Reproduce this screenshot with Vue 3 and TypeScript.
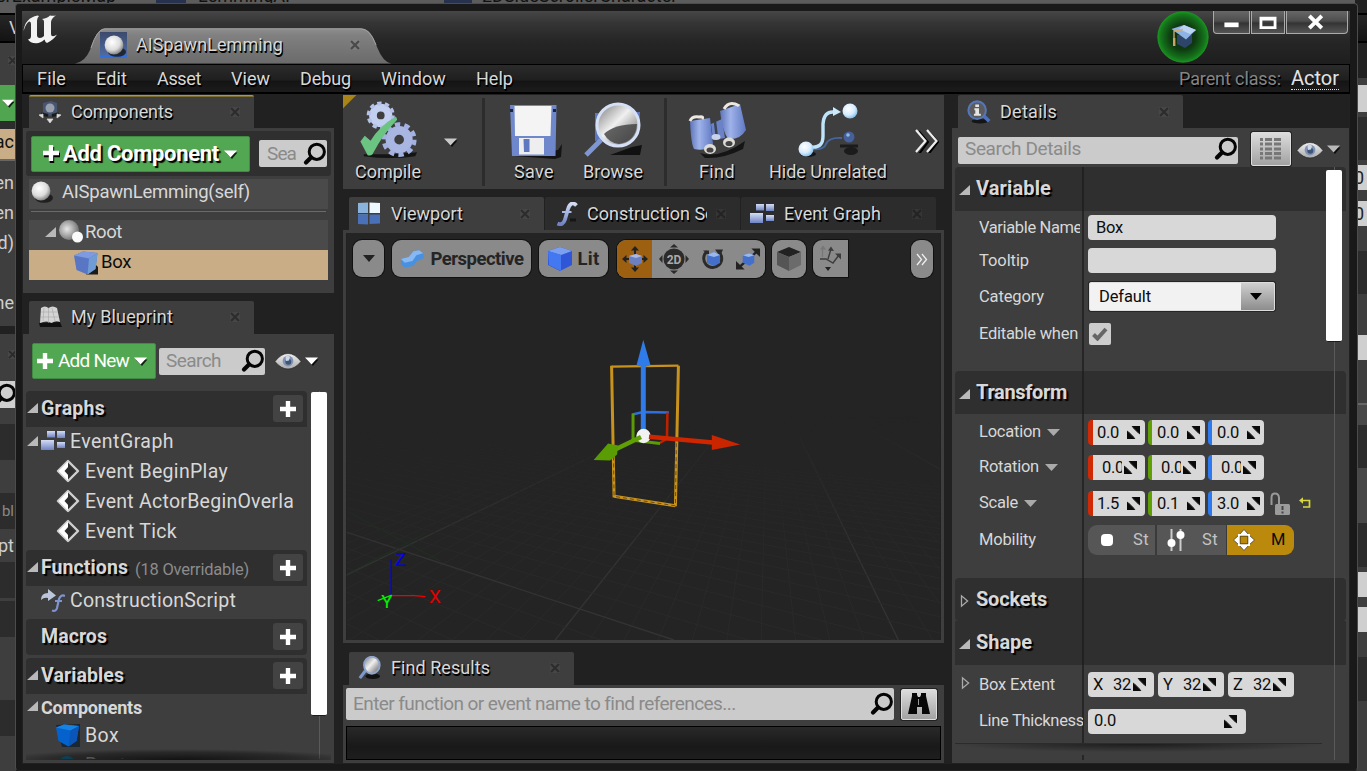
<script setup lang="ts">
import type { Directive } from 'vue'

/* Adjusts tracking so that a label fills the given width in pixels. */
const vFit: Directive<HTMLElement, number> = {
  mounted(el, { value }) {
    const count = (el.textContent ?? '').trim().length
    const natural = el.getBoundingClientRect().width
    el.style.letterSpacing = `${(value - natural) / Math.max(count, 1)}px`
  },
}

interface Strip { h: number; kind: string; text?: string }

const leftStrip: Strip[] = [
  { h: 9, kind: 'tabbar' },
  { h: 30, kind: 'menu', text: 'V' },
  { h: 42, kind: 'panel' },
  { h: 36, kind: 'green' },
  { h: 8, kind: 'header' },
  { h: 30, kind: 'tan', text: 'ac' },
  { h: 2, kind: 'line' },
  { h: 7, kind: 'panel' },
  { h: 30, kind: 'panel', text: 'en' },
  { h: 30, kind: 'panel', text: 'en' },
  { h: 30, kind: 'panel', text: 'd)' },
  { h: 30, kind: 'panel' },
  { h: 30, kind: 'panel', text: 'ne' },
  { h: 8, kind: 'panel' },
  { h: 8, kind: 'gap' },
  { h: 47, kind: 'panel' },
  { h: 27, kind: 'find' },
  { h: 16, kind: 'panel' },
  { h: 36, kind: 'header' },
  { h: 33, kind: 'panel' },
  { h: 36, kind: 'header dim', text: 'bl' },
  { h: 33, kind: 'panel', text: 'pt' },
  { h: 36, kind: 'header' },
  { h: 3, kind: 'panel' },
  { h: 36, kind: 'header' },
  { h: 63, kind: 'panel' },
  { h: 36, kind: 'header' },
  { h: 40, kind: 'panel' },
]

const rightStrip: Strip[] = [
  { h: 13, kind: 'gap' },
  { h: 30, kind: 'menu' },
  { h: 35, kind: 'gap' },
  { h: 7, kind: 'panel' },
  { h: 27, kind: 'field' },
  { h: 5, kind: 'panel' },
  { h: 43, kind: 'header' },
  { h: 5, kind: 'panel' },
  { h: 25, kind: 'field', text: '0' },
  { h: 11, kind: 'panel' },
  { h: 25, kind: 'field', text: '0' },
  { h: 25, kind: 'panel' },
  { h: 43, kind: 'header' },
  { h: 41, kind: 'panel' },
  { h: 25, kind: 'field' },
  { h: 43, kind: 'panel' },
  { h: 2, kind: 'line' },
  { h: 20, kind: 'row' },
  { h: 43, kind: 'header' },
  { h: 55, kind: 'row' },
  { h: 44, kind: 'header' },
  { h: 5, kind: 'panel' },
  { h: 25, kind: 'field' },
  { h: 10, kind: 'panel' },
  { h: 25, kind: 'field' },
  { h: 25, kind: 'panel' },
  { h: 44, kind: 'header' },
  { h: 70, kind: 'panel' },
]

const menus = [
  { label: 'File', w: 29 }, { label: 'Edit', w: 31 }, { label: 'Asset', w: 44 },
  { label: 'View', w: 39 }, { label: 'Debug', w: 51 }, { label: 'Window', w: 65 },
  { label: 'Help', w: 37 },
]

const events = [
  { label: 'Event BeginPlay', w: 143 },
  { label: 'Event ActorBeginOverla', w: 209 },
  { label: 'Event Tick', w: 92 },
]

const vectors = [
  { label: 'Location', w: 62, values: ['0.0', '0.0', '0.0'], cls: 'r-loc' },
  { label: 'Rotation', w: 60, values: ['0.0', '0.0', '0.0'], cls: 'r-rot' },
  { label: 'Scale', w: 39, values: ['1.5', '0.1', '3.0'], cls: 'r-scl' },
]
const axes = ['x', 'y', 'z']

/* Ground grid: two line families that meet on the horizon. */
const fanB = Array.from({ length: 46 }, (_, i) => {
  const n = i - 24
  return { x: 899 + n * 34.4, major: n % 10 === 0 }
})
const fanA = Array.from({ length: 36 }, (_, i) => {
  const n = i - 12
  return { x: 674 + n * 74, major: n === 0 }
})
</script>

<template>
  <div class="desktop">
    <svg class="defs" width="0" height="0">
      <defs>
        <radialGradient id="gBall" cx=".4" cy=".35" r=".7">
          <stop offset="0" stop-color="#fff" /><stop offset=".6" stop-color="#dcdcdc" /><stop offset="1" stop-color="#777" />
        </radialGradient>
        <radialGradient id="gBall2" cx=".4" cy=".45" r=".65">
          <stop offset="0" stop-color="#e8e8e8" /><stop offset=".5" stop-color="#aaa" /><stop offset="1" stop-color="#666" />
        </radialGradient>
        <radialGradient id="gCyan" cx=".4" cy=".35" r=".75">
          <stop offset="0" stop-color="#fff" /><stop offset=".55" stop-color="#d6ecff" /><stop offset="1" stop-color="#6aaede" />
        </radialGradient>
        <linearGradient id="gPale" x1="0" y1="0" x2="0" y2="1">
          <stop offset="0" stop-color="#d3ddf4" /><stop offset="1" stop-color="#6f83c4" />
        </linearGradient>
        <linearGradient id="gLens" x1="0" y1="0" x2="1" y2="1">
          <stop offset="0" stop-color="#777" /><stop offset=".45" stop-color="#f0f0f0" /><stop offset="1" stop-color="#555" />
        </linearGradient>
        <linearGradient id="gTab" x1="0" y1="0" x2="0" y2="1">
          <stop offset="0" stop-color="#8e8e8e" /><stop offset=".2" stop-color="#808080" /><stop offset="1" stop-color="#6b6b6b" />
        </linearGradient>
        <linearGradient id="gEye" x1="0" y1="0" x2="0" y2="1">
          <stop offset="0" stop-color="#f0f0f0" /><stop offset="1" stop-color="#aaa" />
        </linearGradient>
        <linearGradient id="gFade" x1="0" y1="0" x2="0" y2="1">
          <stop offset=".45" stop-color="#000" /><stop offset=".8" stop-color="#ddd" /><stop offset="1" stop-color="#eee" />
        </linearGradient>
        <linearGradient id="gBino" x1="0" y1="0" x2="1" y2="0">
          <stop offset="0" stop-color="#5d75b8" /><stop offset=".4" stop-color="#9fb3ea" /><stop offset="1" stop-color="#5f78c2" />
        </linearGradient>
      </defs>

      <symbol id="i-x" viewBox="0 0 10 10">
        <rect width="10" height="10" fill="#fff" opacity=".09" />
        <path d="M1 1 9 9M9 1 1 9" stroke="#1c1c1c" stroke-width="2.200" />
      </symbol>
      <symbol id="i-mag" viewBox="0 0 24 24">
        <circle cx="13.8" cy="9.8" r="7.600" fill="none" stroke="#050505" stroke-width="3" />
        <path d="M8 15.6 3 20.6" stroke="#050505" stroke-width="4.2" stroke-linecap="round" />
      </symbol>
      <symbol id="i-plus" viewBox="0 0 16 16"><path d="M5.8 0h4.4v5.8H16v4.4h-5.8V16H5.8v-5.8H0V5.8h5.8z" fill="#fff" /></symbol>
      <symbol id="i-caret" viewBox="0 0 14 9">
        <path d="M1.500 2.500h12L8 9z" fill="#000" opacity=".8" /><path d="M0 .5h13L6.500 7.500z" fill="currentColor" />
      </symbol>
      <symbol id="i-open" viewBox="0 0 12 12"><path d="M11 1v10H0z" fill="#b9b9b9" /></symbol>
      <symbol id="i-closed" viewBox="0 0 10 14"><path d="M1.500 1.800v10.400L7.600 7z" fill="none" stroke="#aaa" stroke-width="1.300" /></symbol>
      <symbol id="i-eye" viewBox="0 0 28 18">
        <path d="M1 9.500Q7 1.500 14 1.500t13 8Q21 17 14 17T1 9.500z" fill="url(#gEye)" stroke="#1d1d1d" stroke-width=".6" />
        <circle cx="14" cy="9" r="5.400" fill="#8093b4" /><circle cx="14.3" cy="9.800" r="3" fill="#3f5578" />
        <path d="M11.500 4.500q3-1.500 4.500.5l-1 3.500-3 .5z" fill="#cfd8e6" />
      </symbol>
      <symbol id="i-ball" viewBox="0 0 24 24">
        <ellipse cx="14" cy="18" rx="9" ry="4.800" fill="#111" opacity=".75" /><circle cx="11" cy="11" r="9.400" fill="url(#gBall)" />
      </symbol>
      <symbol id="i-cube" viewBox="0 0 24 24">
        <path d="M12 23.500 21 13l3 3v7.500z" fill="#1a1a1a" />
        <path d="M0 4.500 9 .5 23.500 2 21.500 18 13.500 23.500 2.500 19z" fill="#5876c4" />
        <path d="M0 4.500 9 .5 23.500 2 15 7.500z" fill="#7f9ae0" /><path d="M15 7.500 23.500 2 21.500 18 13.500 23.500z" fill="#6f9cd4" />
      </symbol>
      <symbol id="i-cube2" viewBox="0 0 24 24">
        <path d="M0 2 24 1v23H6z" fill="#10202e" opacity=".75" />
        <path d="M0 4.500 8 1.500 23 3 20.500 18 12.500 23.500 2.500 18z" fill="#0562cc" />
        <path d="M0 4.500 8 1.500 23 3 14.500 7.500z" fill="#1583e4" /><path d="M14.500 7.500 23 3 20.500 18 12.500 23.500z" fill="#0a55b8" />
      </symbol>
      <symbol id="i-scene" viewBox="0 0 24 24">
        <path d="M5 3 13 1l6 2v9l-7 4-7-4z" fill="#465672" /><circle cx="12" cy="8" r="4.500" fill="#9a9fae" />
        <path d="M3 14 10 15.500M21 14 14 15.500" stroke="#1a1a1a" stroke-width="3" />
        <path d="M1 15l4-1v4zM23 15l-4-1v4zM9 19h6l-3 4z" fill="#e0e0e0" stroke="#ccc" stroke-width=".8" />
      </symbol>
      <symbol id="i-book" viewBox="0 0 24 24">
        <path d="M1 18 22 17l2 5H2z" fill="#111" />
        <path d="M3 3q4-3 7.500 0 4-3 8.500 0l3 14q-4-2-8.500 1-5-3-11.500 0z" fill="#d4d4d4" />
        <path d="M10.500 3v15M6 3 5 16M14 3l3 13M3 7h17M2.500 12h18" stroke="#a4a4a4" stroke-width=".6" fill="none" />
      </symbol>
      <symbol id="i-graph" viewBox="0 0 24 20">
        <rect x="6" y="0" width="8" height="6.500" fill="url(#gPale)" /><rect x="16" y="0" width="8" height="7" fill="url(#gPale)" />
        <rect x="0" y="9" width="13" height="10" fill="url(#gPale)" /><rect x="16" y="11" width="8" height="6" fill="url(#gPale)" />
      </symbol>
      <symbol id="i-event" viewBox="0 0 24 24">
        <path d="M12 2 22 12 12 22 2 12z" fill="#343434" stroke="#cfcfcf" stroke-width="2.400" stroke-linejoin="round" />
        <path d="M12 2.500v19L2.500 12z" fill="#fff" /><path d="M13 7 18 12 13 17 8.500 12z" fill="#2e2e2e" />
      </symbol>
      <symbol id="i-func" viewBox="0 0 24 24">
        <path d="M0 11Q0 4 7 4V0l8 6.500L7 12V9Q3 8 0 11z" fill="#bcc6da" />
        <path d="M24 7q-4-2-6 3l-2 9q-1 4-5 2.500M14 12h7" fill="none" stroke="#8094d0" stroke-width="2.200" />
      </symbol>
      <symbol id="i-f" viewBox="0 0 22 24">
        <path d="M14 18h6" stroke="#161616" stroke-width="3" />
        <path d="M20.500 3.500Q15-2 12 7L9 17.500Q7 24 1.500 21.500" fill="none" stroke="url(#gPale)" stroke-width="3.800" />
        <path d="M6 10h9.500" stroke="#a8b8e4" stroke-width="2" />
      </symbol>
      <symbol id="i-view" viewBox="0 0 22 24">
        <path d="M0 1 10 .5V11H0zM0 12.500h10V22L0 21z" fill="#8ab4dc" /><path d="M11.500 .5 22 1v10H11.500z" fill="#eef8ff" />
        <path d="M11.500 12.500H22v9l-10.500.5zM0 12.500h10V22.500L0 22z" fill="#4a70b8" />
      </symbol>
      <symbol id="i-lens" viewBox="0 0 24 26">
        <ellipse cx="15" cy="22" rx="8" ry="3" fill="#111" />
        <path d="M7 16 1 24" stroke="#7d98cc" stroke-width="3.400" /><ellipse cx="14" cy="10" rx="8.500" ry="9.200" fill="url(#gLens)" stroke="#8fa5cc" stroke-width="2" />
      </symbol>
      <symbol id="i-info" viewBox="0 0 26 26">
        <ellipse cx="14" cy="23" rx="9" ry="2.500" fill="#151515" />
        <path d="M17 16l7 7" stroke="#4a70c0" stroke-width="4" /><circle cx="11" cy="11" r="9.500" fill="#5c5c5c" stroke="#5576b8" stroke-width="2.200" />
        <path d="M9 5h4v2.600H9zM8 9h5v6h2v2H7.500v-2H9v-4H8z" fill="#e4e4e4" />
      </symbol>
      <symbol id="i-spin" viewBox="0 0 13 13">
        <path d="M4.500 0H13v8.500zM0 4.500V13h8.500z" fill="#0a0a0a" />
        <path d="M5.500 1.500 11.500 7.500M1.500 5.500 7.500 11.500" stroke="#0a0a0a" stroke-width=".5" />
      </symbol>
    </svg>

    <!-- window behind: visible edges only -->
    <div class="back-top">
      <span class="bt1">erExampleMap</span><span class="bt-ico"></span><span class="bt2">LemmingAI</span><span class="bt-ico2"></span><span class="bt3">2DSideScrollerCharacter</span>
    </div>
    <div class="back-mid">
      <div class="strip">
        <div v-for="(s, i) in leftStrip" :key="i" class="seg" :class="s.kind" :style="{ height: s.h + 'px' }">
          <span v-if="s.text">{{ s.text }}</span>
          <svg v-if="s.kind === 'find'" class="find-ico"><use href="#i-mag" /></svg>
          <svg v-if="s.kind === 'green'" class="green-ico"><use href="#i-caret" /></svg>
          <svg v-if="i === 2 || i === 15" class="x-ico"><use href="#i-x" /></svg>
        </div>
      </div>
      <div class="strip right">
        <div v-for="(s, i) in rightStrip" :key="i" class="seg" :class="s.kind" :style="{ height: s.h + 'px' }">
          <span v-if="s.text">{{ s.text }}</span>
        </div>
      </div>
    </div>

    <div class="window">
      <header class="title">
        <svg class="logo" viewBox="0 0 34 30">
          <path d="M.5 17Q2 4 14.500 1.500l1.500.5Q14 4 14 6.500V21q0 3 3 3 2 0 4-2V7.500Q21 5.500 19 5q5.500-1 8-3.500 3 .5 6 0-4.500 2.500-5 6.500v12q0 2.300 2 2.300 1.800 0 4-1.800-3.500 5.500-10 8.500-2-1-2.500-3.500Q17 29.500 13 29.200 7 29 5 25.500q3-.5 3-3.500V10Q8 7 6 7.500 3 9 .5 17z" fill="#f2f2f2" />
        </svg>
        <div class="wtab">
          <svg class="wtab-bg" viewBox="0 0 316 36"><path d="M0 35.500Q10 34 15 22 22 0 30 .5H286Q296 0 302 19 308 34 316 35.500z" fill="url(#gTab)" /><path d="M16 20Q22 1 30 .8H286Q295 1 301 17" fill="none" stroke="#a2a2a2" stroke-width="1" /></svg>
          <div class="wtab-row">
            <span class="thumb"><svg width="24" height="24"><use href="#i-ball" /></svg></span>
            <span v-fit="147" class="t18 sh">AISpawnLemming</span>
            <svg class="xs"><use href="#i-x" /></svg>
          </div>
        </div>
        <svg class="cap" viewBox="0 0 52 52">
          <defs><radialGradient id="gCap"><stop offset="0" stop-color="#0c260d" /><stop offset=".5" stop-color="#0f3a11" /><stop offset=".85" stop-color="#14701a" /><stop offset="1" stop-color="#18901f" /></radialGradient></defs>
          <circle cx="26" cy="26" r="25.200" fill="url(#gCap)" stroke="#1d9a22" stroke-width=".8" />
          <path d="M20 24v9l8 4 7-5v-8z" fill="#2c4568" /><path d="M14.500 18 27 14l12 5-10 9.500z" fill="#8db4e4" /><path d="M27 14 39 19l-6 4-11-5z" fill="#bcd4f4" />
          <path d="M26 18.500 17 20v12" fill="none" stroke="#d0ad78" stroke-width="1.300" /><path d="M16 27h2.400v8H16z" fill="#c9a468" />
        </svg>
        <div class="winbtns">
          <span class="b1"><svg viewBox="0 0 37 23"><path d="M11 12h15v5H11z" fill="#fff" /></svg></span>
          <span class="b2"><svg viewBox="0 0 34 23"><path d="M8 6h18v13H8zM11 10v6h12v-6z" fill="#fff" fill-rule="evenodd" /></svg></span>
          <span class="b3"><svg viewBox="0 0 62 23"><path d="M23 5 36 18M36 5 23 18" stroke="#fff" stroke-width="4" /></svg></span>
        </div>
      </header>

      <nav class="menubar">
        <span v-for="m in menus" :key="m.label" v-fit="m.w" class="menu-item sh">{{ m.label }}</span>
        <span v-fit="102" class="pclass sh">Parent class:</span>
        <span class="actor"><span v-fit="48">Actor</span></span>
      </nav>

      <main class="work">
        <section class="col left">
          <div class="tab active focus"><svg class="ti"><use href="#i-scene" /></svg><span v-fit="102" class="t18 sh">Components</span><svg class="xs"><use href="#i-x" /></svg></div>
          <div class="panel comps">
            <div class="addbar">
              <button class="green-btn big"><svg class="plus"><use href="#i-plus" /></svg><b v-fit="156">Add Component</b><svg class="caret"><use href="#i-caret" /></svg></button>
              <div class="search s1"><span v-fit="29">Sea</span><svg class="mag"><use href="#i-mag" /></svg></div>
            </div>
            <div class="crow self"><svg class="i24"><use href="#i-ball" /></svg><span v-fit="188">AISpawnLemming(self)</span></div>
            <div class="rule"></div>
            <div class="crow root"><svg class="tri"><use href="#i-open" /></svg>
              <svg class="i24" viewBox="0 0 24 24"><circle cx="10" cy="10" r="10" fill="url(#gBall2)" /><circle cx="18.500" cy="17" r="5.500" fill="#fafafa" /></svg>
              <span v-fit="37">Root</span></div>
            <div class="crow boxrow"><svg class="i24"><use href="#i-cube" /></svg><span v-fit="30">Box</span></div>
          </div>

          <div class="tab active second up"><svg class="ti"><use href="#i-book" /></svg><span v-fit="102" class="t18 sh">My Blueprint</span><svg class="xs"><use href="#i-x" /></svg></div>
          <div class="panel blue">
            <div class="bpbar">
              <button class="green-btn"><svg class="plus"><use href="#i-plus" /></svg><span v-fit="71">Add New</span><svg class="caret"><use href="#i-caret" /></svg></button>
              <div class="search s2"><span v-fit="55">Search</span><svg class="mag"><use href="#i-mag" /></svg></div>
              <svg class="eye"><use href="#i-eye" /></svg><svg class="caret ec"><use href="#i-caret" /></svg>
            </div>
            <div class="bpbody">
              <div class="tree">
                <div class="ghead"><svg class="tri"><use href="#i-open" /></svg><b v-fit="64">Graphs</b><span class="addp"><svg><use href="#i-plus" /></svg></span></div>
                <div class="trow eg"><svg class="tri"><use href="#i-open" /></svg><svg class="gico"><use href="#i-graph" /></svg><span v-fit="104">EventGraph</span></div>
                <div v-for="e in events" :key="e.label" class="trow ev"><svg class="i24"><use href="#i-event" /></svg><span v-fit="e.w">{{ e.label }}</span></div>
                <div class="ghead fn"><svg class="tri"><use href="#i-open" /></svg><b v-fit="87">Functions</b><em v-fit="114">(18 Overridable)</em><span class="addp"><svg><use href="#i-plus" /></svg></span></div>
                <div class="trow cs"><svg class="i24"><use href="#i-func" /></svg><span v-fit="166">ConstructionScript</span></div>
                <div class="ghead mc"><svg class="tri"></svg><b v-fit="66">Macros</b><span class="addp"><svg><use href="#i-plus" /></svg></span></div>
                <div class="ghead vr"><svg class="tri"><use href="#i-open" /></svg><b v-fit="83">Variables</b><span class="addp"><svg><use href="#i-plus" /></svg></span></div>
                <div class="trow cp"><svg class="tri"><use href="#i-open" /></svg><b v-fit="101">Components</b></div>
                <div class="trow ev bx"><svg class="i24"><use href="#i-cube2" /></svg><span v-fit="34">Box</span></div>
                <div class="trow ev rt"><svg class="i24" viewBox="0 0 24 24"><circle cx="11" cy="11" r="9" fill="#0a6a94" /></svg><span v-fit="41">Root</span></div>
              </div>
              <div class="sbar"><div class="thumbbar"></div></div>
            </div>
            <div class="fade"></div>
          </div>
        </section>

        <section class="col mid">
          <div class="toolbar">
            <div class="tool compile">
              <svg viewBox="355 98 64 62">
                <path d="M362 155h30l25-2-2 4q-25 4-53 0z" fill="#141414" />
                <circle cx="379.500" cy="115" r="8" fill="none" stroke="#c3cff0" stroke-width="8" /><circle cx="379.500" cy="115" r="12.500" fill="none" stroke="#b4c2ea" stroke-width="4" stroke-dasharray="4.400 3.450" />
                <circle cx="398.500" cy="140" r="9.500" fill="none" stroke="#a9b6e2" stroke-width="9" /><circle cx="398.500" cy="140" r="15.500" fill="none" stroke="#a3b1e0" stroke-width="5" stroke-dasharray="5.500 4.240" />
                <path d="M358.500 142 363 136l6 5Q378 126 395 116q2 3 1 4-14 14-25 35-2 2-5 1z" fill="#6cc482" />
              </svg><span v-fit="66" class="sh">Compile</span>
            </div>
            <svg class="caret tc"><use href="#i-caret" /></svg>
            <i class="sep"></i>
            <div class="tool save">
              <svg viewBox="506 98 60 62">
                <path d="M516 156 560 150l4-6-1 13-6 2z" fill="#141414" /><path d="M512 105h46.500l-1 51H514z" fill="#6f88cc" />
                <path d="M516.500 106h37l-1 30H517z" fill="#f4f4f4" /><path d="M521 138h25v16.500H521z" fill="#eee" /><path d="M525.500 139h6v13h-5.500z" fill="#6078c0" />
                <path d="M512 109h3v3h-3zM555 109h3v3h-3z" fill="#1c2440" />
              </svg><span v-fit="40" class="sh">Save</span>
            </div>
            <div class="tool browse">
              <svg viewBox="582 98 62 62">
                <path d="M610 155h30l2-10-10 2z" fill="#111" /><path d="M595 113h12v26l-12 2zM632 112h8l-1 20z" fill="#5c78c0" />
                <path d="M601 140 586 155" stroke="#7e96d2" stroke-width="5" /><circle cx="618" cy="125" r="21" fill="url(#gLens)" stroke="#d5e0f6" stroke-width="3" />
                <path d="M604 134Q614 124 637 124q-1 17-18 20-10-1-15-10z" fill="#3f3f3f" opacity=".8" />
              </svg><span v-fit="60" class="sh">Browse</span>
            </div>
            <i class="sep s2nd"></i>
            <div class="tool findt">
              <svg viewBox="686 98 62 62">
                <path d="M700 153q20 6 45-12l-2 8q-20 10-38 9z" fill="#151515" />
                <path d="M690 121 710 118 713 144Q705 152 694 149 691 144 690 121z" fill="url(#gBino)" />
                <path d="M720 111 740 104 746 130Q740 140 728 139 722 130 720 111z" fill="url(#gBino)" />
                <path d="M711 124 722 119 725 138 713 140z" fill="#6b82c6" /><path d="M715 122l2 16" stroke="#3b4252" stroke-width="2.500" />
                <path d="M690 121q2-5 9-4 5-1 3 2M724 109q4-7 11-5 3 1 4 2" stroke="#ece8e0" stroke-width="3" fill="none" />
                <ellipse cx="710" cy="149" rx="6" ry="5" fill="#dedcd6" /><ellipse cx="710" cy="150" rx="3.500" ry="2.600" fill="#444" /><ellipse cx="729" cy="142.500" rx="6" ry="5" fill="#dedcd6" /><ellipse cx="729" cy="143.500" rx="3.500" ry="2.600" fill="#444" />
                <ellipse cx="716" cy="137" rx="4.500" ry="3" fill="#c9d2ea" />
              </svg><span v-fit="36" class="sh">Find</span>
            </div>
            <div class="tool hide">
              <svg viewBox="797 98 62 62">
                <ellipse cx="808" cy="154" rx="8" ry="3" fill="#151515" /><ellipse cx="851" cy="151" rx="7" ry="4" fill="#1b1b1b" /><path d="M840 146h18" stroke="#1b1b1b" stroke-width="3" />
                <path d="M813 149Q824 150 826 144 829 137 842 138" fill="none" stroke="#46669c" stroke-width="2" />
                <path d="M812 147Q823 148 823 136V124Q824 111 834 112" fill="none" stroke="#bfe4fa" stroke-width="3.400" /><path d="M833 107l8 5-8 4z" fill="#cbeafc" />
                <circle cx="850" cy="111" r="7.500" fill="url(#gCyan)" /><circle cx="806" cy="149" r="7.500" fill="url(#gCyan)" /><circle cx="849" cy="137" r="5.500" fill="#45619c" /><circle cx="848" cy="135" r="1.800" fill="#9ab6e4" />
              </svg><span v-fit="118" class="sh">Hide Unrelated</span>
            </div>
            <svg class="more" viewBox="0 0 24 24"><path d="M3 1.500 12 12 3 24M12.500 1.500 22 12 12.500 24" transform="translate(1 1)" fill="none" stroke="#000" stroke-width="2" /><path d="M1 1 10.500 12 1 23M12 1 21.500 12 12 23" fill="none" stroke="#eee" stroke-width="2.200" /></svg>
          </div>

          <div class="tabs">
            <div class="tab active vt"><svg class="ti"><use href="#i-view" /></svg><span v-fit="72" class="t18 sh">Viewport</span><svg class="xs"><use href="#i-x" /></svg></div>
            <div class="tab idle ct"><svg class="ti"><use href="#i-f" /></svg><span class="clipt"><span v-fit="154" class="t18 sh">Construction Script</span></span><svg class="xs"><use href="#i-x" /></svg></div>
            <div class="tab idle et"><svg class="ti g"><use href="#i-graph" /></svg><span v-fit="97" class="t18 sh">Event Graph</span><svg class="xs"><use href="#i-x" /></svg></div>
          </div>

          <div class="viewport">
            <svg class="scene" viewBox="346 233 595 408">
              <defs><mask id="fade"><rect x="346" y="233" width="595" height="408" fill="url(#gFade)" /></mask></defs>
              <rect x="346" y="233" width="595" height="408" fill="#242424" />
              <g mask="url(#fade)">
                <line v-for="(l, i) in fanB" :key="'b' + i" x1="768" y1="372" :x2="l.x" y2="641" :stroke="l.major ? '#353535' : '#2a2a2a'" :stroke-width="l.major ? 1.4 : 1" />
                <line v-for="(l, i) in fanA" :key="'a' + i" x1="-143" y1="372" :x2="l.x" y2="641" :stroke="l.major ? '#353535' : '#2a2a2a'" :stroke-width="l.major ? 1.4 : 1" />
                <path d="M346 575 425 534M346 512 440 562" stroke="#1f3320" stroke-width="1" />
              </g>
              <g fill="none" stroke="#c8921c" stroke-width="3">
                <path d="M611.500 367 678.500 366" stroke-width="2.400" /><path d="M611.500 366 614 498M678.500 366 675.500 507" /><path d="M614 497 675.500 506.500" />
                <path d="M613.300 450 614 497 675.500 506.500 676.500 440" stroke="#6b4c0c" stroke-width="1" stroke-dasharray="4 3" />
              </g>
              <path d="M632.500 415 643 412.500 669 413" fill="none" stroke="#2d6fe0" stroke-width="2.600" />
              <path d="M667.500 413 667 439 659 444" fill="none" stroke="#bd2200" stroke-width="2.600" />
              <path d="M633 414v26M635 441 660 444" fill="none" stroke="#5b9c04" stroke-width="3" />
              <path d="M643.300 434V364" stroke="#2f7bea" stroke-width="5" /><path d="M643.300 340 636.500 365.500q7 3 14 0z" fill="#2f7bea" />
              <circle cx="643.500" cy="436.500" r="7.200" fill="#f2f2f2" />
              <path d="M649 437.200 713 443" stroke="#cf2600" stroke-width="4.400" /><path d="M712 435.500 740.500 445 712 450.500z" fill="#c92600" />
              <path d="M641 437.500 613 451" stroke="#5fa103" stroke-width="4.600" /><path d="M593.500 460.500 608 444l10 2-1 9-7 6z" fill="#5a9c04" />
              <path d="M390.500 560v36" stroke="#0000f0" stroke-width="1.200" /><path d="M390.500 596.500H414L425 597.500" fill="none" stroke="#f00000" stroke-width="1.200" /><path d="M391 596 377 601.500" stroke="#00f000" stroke-width="1.300" />
              <text x="394" y="567" fill="#0000f5" class="ax">Z</text><text x="428.500" y="604" fill="#e00000" class="ax">X</text><text x="380.500" y="608.500" fill="#00f000" class="ax">Y</text>
            </svg>
            <div class="vbar">
              <span class="vb v1"><svg width="12" height="7"><path d="M0 0h12L6 7z" fill="#222" /></svg></span>
              <span class="vb v2"><svg width="25" height="20" viewBox="0 0 26 20"><path d="M1 10 9 8 14 2 20 1 24 4 25 9 18 12 14 17 5 19 1 15z" fill="#4a90e0" /><path d="M1 10 9 8l5-6 6-1 4 3-7 2-4 6-8 2z" fill="#86b8f4" /></svg><b v-fit="93">Perspective</b></span>
              <span class="vb v3"><svg width="24" height="24" viewBox="0 0 24 24"><path d="M0 4 12 0 24 4v14l-12 6L0 18z" fill="#3056d8" /><path d="M0 4 12 0 24 4 13 8z" fill="#7ba0f0" /><path d="M0 4 13 8v16L1 18z" fill="#4478f0" /></svg><b v-fit="22">Lit</b></span>
              <span class="vb group">
                <span class="orange"><svg width="26" height="26" viewBox="0 0 26 26"><path d="M13 3v20M3 13h20" stroke="#222" stroke-width="2" /><path d="M13 0l4 4.500H9zM13 26l4-4.500H9zM0 13l4.500-4v8zM26 13l-4.500-4v8z" fill="#222" /><path d="M7 10l7-2 6 2v7l-6 3-7-3z" fill="#6c80c0" /><path d="M7 10l7-2 6 2-6 2z" fill="#aab8e4" /></svg></span>
                <span class="g2"><svg width="30" height="30" viewBox="0 0 30 30"><circle cx="15" cy="15" r="10.500" fill="#2b2b2b" /><path d="M15 0l4 3.500h-8zM15 30l4-3.500h-8zM0 15l3.500-4v8zM30 15l-3.500-4v8z" fill="#2b2b2b" /><text x="15" y="19.500" text-anchor="middle" class="d2">2D</text></svg></span>
                <span><svg width="24" height="24" viewBox="0 0 24 24"><path d="M6 4.500A9 9 0 1 0 18 5" fill="none" stroke="#2b2b2b" stroke-width="3" /><path d="M14 2.500h8l-3 7z" fill="#2b2b2b" /><path d="M2 3.500h6v5z" fill="#2b2b2b" /><path d="M6 8l7-3 6 3v8l-6 3-7-3z" fill="#4470cc" /><path d="M6 8l7-3 6 3-6 2z" fill="#9ab8ec" /></svg></span>
                <span><svg width="25" height="24" viewBox="0 0 26 24"><path d="M4 20 22 4" stroke="#222" stroke-width="2.400" /><path d="M16 1h9v9zM0 14v9h9z" fill="#222" /><path d="M7 8l7-2 5 2v8l-5 3-7-3z" fill="#4470cc" /><path d="M7 8l7-2 5 2-6 2z" fill="#9ab8ec" /></svg></span>
              </span>
              <span class="vb v5"><svg width="24" height="24" viewBox="0 0 24 24"><path d="M0 5 12 0 24 5 12 10z" fill="#222" /><path d="M0 5 12 10v14L0 18z" fill="#555" /><path d="M24 5 12 10v14l12-6z" fill="#6b6b6b" /></svg></span>
              <span class="vb v6"><svg width="24" height="27" viewBox="0 0 24 27"><path d="M1 14 7 14 14 18 20 10M9 14 12 4" fill="none" stroke="#3c3c3c" stroke-width="1.400" /><path d="M3.500 12V4" stroke="#777" stroke-width="1.200" /><path d="M9 5.500l3-4 3 4.500zM16 8.500h6v6z" fill="#3c3c3c" /><path d="M1 4.500l3-4 3 4z" fill="#777" /><path d="M6 22h6l-3 4z" fill="#222" /></svg></span>
              <span class="vb v7"><svg width="12" height="13" viewBox="0 0 12 13"><path d="M1 1 5.500 6.500 1 12M6 1 10.500 6.500 6 12" fill="none" stroke="#eee" stroke-width="1.300" /></svg></span>
            </div>
          </div>

          <div class="tab active ft up"><svg class="ti"><use href="#i-lens" /></svg><span v-fit="99" class="t18 sh">Find Results</span><svg class="xs"><use href="#i-x" /></svg></div>
          <div class="panel findp">
            <div class="findrow">
              <div class="search s3"><span v-fit="382">Enter function or event name to find references...</span><svg class="mag"><use href="#i-mag" /></svg></div>
              <span class="sq"><svg width="22" height="22" viewBox="0 0 22 22"><path d="M4 0h5v2l1 2h2l1-2V0h5v3l4 18h-8v-7H9v7H0L4 3z" fill="#080808" /><path d="M10.500 6v6" stroke="#999" /></svg></span>
            </div>
            <div class="results"></div>
          </div>
        </section>

        <section class="col right">
          <div class="tab active dt"><svg class="ti"><use href="#i-info" /></svg><span v-fit="57" class="t18 sh">Details</span><svg class="xs"><use href="#i-x" /></svg></div>
          <div class="panel det">
            <div class="dbar">
              <div class="search s4"><span v-fit="116">Search Details</span><svg class="mag"><use href="#i-mag" /></svg></div>
              <span class="sq list"><svg width="22" height="22" viewBox="0 0 22 22"><path d="M0 1.500h3M5 1.500h7M14 1.500h7M0 6h3M5 6h7M14 6h7M0 11h3M5 11h7M14 11h7M0 15.500h3M5 15.500h7M14 15.500h7M0 20h3M5 20h7M14 20h7" stroke="#777" stroke-width="2.800" /></svg></span>
              <svg class="eye"><use href="#i-eye" /></svg><svg class="caret ec"><use href="#i-caret" /></svg>
            </div>
            <div class="props">
              <div class="rows">
                <div class="phead"><svg class="tri"><use href="#i-open" /></svg><b v-fit="75">Variable</b></div>
                <div class="prow vn"><label><span v-fit="103">Variable Name</span></label><div class="inp"><span v-fit="27">Box</span></div></div>
                <div class="prow tt"><label><span v-fit="50">Tooltip</span></label><div class="inp"></div></div>
                <div class="prow cg"><label><span v-fit="65">Category</span></label><div class="combo"><span v-fit="52">Default</span><i><svg width="12" height="7"><path d="M0 0h12L6 7z" fill="#000" /></svg></i></div></div>
                <div class="prow ew"><label><span v-fit="99">Editable when</span></label><div class="chk"><svg width="16" height="14" viewBox="0 0 16 14"><path d="M1.500 7.500 5.500 11.500 14 2" fill="none" stroke="#666" stroke-width="4" /></svg></div></div>
                <div class="phead tr"><svg class="tri"><use href="#i-open" /></svg><b v-fit="91">Transform</b></div>
                <div v-for="v in vectors" :key="v.label" class="prow" :class="v.cls">
                  <label><span v-fit="v.w">{{ v.label }}</span><svg class="lc"><path d="M0 0h13L6.500 7z" fill="#aaa" /></svg></label>
                  <div class="vec">
                    <div v-for="(n, i) in v.values" :key="i" class="num" :class="axes[i]"><span class="nv"><span v-fit="22">{{ n }}</span></span><svg class="spin"><use href="#i-spin" /></svg></div>
                    <template v-if="v.label === 'Scale'">
                      <svg class="lock" viewBox="0 0 20 24"><path d="M1.500 13V5.500Q1.500 1.500 5 1.500t4 4V13" fill="none" stroke="#999" stroke-width="2" /><rect x="5" y="12" width="15" height="11" rx="1.500" fill="#9b9b9b" /><path d="M11.500 14h2v4h-2zM11.500 19.500h2v2h-2z" fill="#444" /></svg>
                      <svg class="undo" viewBox="0 0 12 12"><path d="M2 3.500h8.500v6.500H4" fill="none" stroke="#d8d83c" stroke-width="1.700" /><path d="M0 3.500 4 .2v6.600z" fill="#d8d83c" /></svg>
                    </template>
                  </div>
                </div>
                <div class="prow mb"><label><span v-fit="57">Mobility</span></label>
                  <div class="mob">
                    <span class="m1"><svg width="14" height="14" viewBox="0 0 14 14"><rect x="1" y="1" width="12" height="12" rx="4" fill="#fff" /></svg><span v-fit="16">St</span></span>
                    <span class="m2"><svg width="18" height="22" viewBox="0 0 18 22"><path d="M4.500 0v22M13.500 0v22" stroke="#ccc" stroke-width="2" /><circle cx="4.500" cy="14" r="4" fill="#fff" /><circle cx="13.500" cy="6" r="4" fill="#fff" /></svg><span v-fit="16">St</span></span>
                    <span class="m3"><svg width="22" height="22" viewBox="0 0 22 22"><path d="M11 .5l4.500 5h-9zM11 21.500l4.500-5h-9zM.5 11l5-4.500v9zM21.500 11l-5-4.500v9z" fill="#fff" stroke="#333" stroke-width=".7" /><path d="M6 6h10v10H6z" fill="none" stroke="#fff" stroke-width="2" /><path d="M7.200 7.200h7.600v7.600H7.200z" fill="#bb8a0c" stroke="#4d3a08" stroke-width=".8" /></svg><span v-fit="14">M</span></span>
                  </div>
                </div>
                <div class="phead sk"><svg class="tri cl"><use href="#i-closed" /></svg><b v-fit="71">Sockets</b></div>
                <div class="phead shp"><svg class="tri"><use href="#i-open" /></svg><b v-fit="56">Shape</b></div>
                <div class="prow be"><svg class="tri cl"><use href="#i-closed" /></svg><label><span v-fit="76">Box Extent</span></label>
                  <div class="vec ext">
                    <div v-for="a in ['X', 'Y', 'Z']" :key="a" class="num plain"><span class="axl">{{ a }}</span><span v-fit="18">32</span><svg class="spin"><use href="#i-spin" /></svg></div>
                  </div>
                </div>
                <div class="prow lt"><label><span v-fit="105">Line Thickness</span></label><div class="num plain wide"><span v-fit="22">0.0</span><svg class="spin"><use href="#i-spin" /></svg></div></div>
                <div class="endshade"></div>
                <div class="tailrow"></div>
              </div>
              <div class="sbar dsb"><div class="thumbbar"></div></div>
            </div>
          </div>
        </section>
      </main>
    </div>
  </div>
</template>

<style>
html, body { margin: 0; background: #1c1c1c; overflow: hidden; }
</style>

<style scoped>
* { box-sizing: border-box; }
.desktop { position: relative; width: 1367px; height: 771px; overflow: hidden; background: #1c1c1c; font-family: Roboto, "Liberation Sans", sans-serif; color: #d8d8d8; font-size: 18px; line-height: 1; }
svg { display: block; flex: none; }
span, b, em { white-space: nowrap; flex: none; }
.defs { position: absolute; }
.sh { text-shadow: 1px 1px 1px #000, 1px 2px 0 #000; }
.t18 { font-size: 18px; }

/* edges of the rear window */
.back-top { height: 4px; display: flex; align-items: flex-end; overflow: hidden; background: #5c5c5c; color: #111; font-size: 18px; }
.back-top span { line-height: 18px; margin-bottom: -1px; }
.bt1 { width: 160px; margin-left: -4px; } .bt-ico { width: 30px; height: 16px; background: #26324e; margin-right: 12px; }
.bt2 { width: 246px; } .bt-ico2 { width: 28px; height: 16px; background: #26324e; margin-right: 10px; }
.back-mid { display: flex; justify-content: space-between; height: 767px; }
.strip { width: 16px; }
.strip.right { width: 12px; margin-top: -4px; }
.seg { display: flex; align-items: center; overflow: hidden; font-size: 18px; color: #cfcfcf; }
.seg span { width: 14px; display: flex; justify-content: flex-end; }
.strip.right .seg span { justify-content: flex-start; margin-left: -1px; color: #222; }
.seg.tan { padding-bottom: 5px; }
.tabbar { background: #5c5c5c; } .menu { background: linear-gradient(#262626, #131313); border: solid #000; border-width: 2px 0; }
.seg.menu span { padding-left: 9px; justify-content: flex-start; }
.seg.panel { background: #3e3e3e; } .green { background: #50a650; } .header { background: #2c2c2c; }
.tan { background: #c8ad87; } .seg.tan { color: #111; } .line { background: #666; } .gap { background: #212121; } .row { background: #484848; }
.find, .field { background: #cfcfcf; } .seg.dim { color: #888; font-size: 15px; }
.find-ico { width: 24px; height: 24px; margin-left: -7px; } .green-ico { width: 13px; height: 9px; margin-left: 2px; color: #fff; }
.x-ico { width: 9px; height: 9px; margin: -7px 0 0 8px; opacity: .55; }

/* window frame */
.window { position: absolute; left: 15px; top: 3px; width: 1343px; height: 768px; background: #191919; border: 1px solid #4c4c4c; border-radius: 4px; border-bottom-color: #222; padding: 7px 7px 7px 6px; }
.title { height: 53px; display: flex; background: linear-gradient(#474747 0, #353535 12px, #262626 30px, #1e1e1e 53px); }
.logo { width: 34px; height: 30px; margin: 3px 0 0 1px; }
.wtab { display: grid; width: 316px; height: 36px; margin: 17px 0 0 18px; }
.wtab > * { grid-area: 1 / 1; }
.wtab-bg { width: 316px; height: 36px; }
.wtab-row { display: flex; align-items: center; padding-left: 25px; height: 34px; z-index: 1; }
.thumb { width: 27px; height: 26px; background: linear-gradient(#3c4a6c, #4f6aa0 88%, #2f6fe0 90%); display: flex; justify-content: center; padding: 2px 0 0 2px; margin-right: 9px; }
.wtab-row .xs { margin-left: 67px; margin-right: 0; }
.xs { width: 10px; height: 10px; opacity: .5; }
.cap { width: 52px; height: 52px; margin-left: 766px; }
.winbtns { display: flex; gap: 1px; margin-left: 4px; height: 24px; }
.winbtns span { height: 23px; border: 1px solid #aaa; border-top: 0; background: linear-gradient(#676767, #4e4e4e 45%, #343434 55%, #555); }
.winbtns .b1 { width: 37px; border-radius: 0 0 0 4px; } .winbtns .b2 { width: 34px; } .winbtns .b3 { width: 62px; border-radius: 0 0 4px 0; }
.winbtns svg { width: 100%; height: 22px; }
.menubar { height: 30px; margin-right: 0; border: 2px solid #000; border-width: 1px 1px 2px; background: linear-gradient(#2b2b2b, #1f1f1f 55%, #141414 60%, #1c1c1c); display: flex; align-items: center; padding: 0 10px 0 14px; gap: 30px; }
.menu-item { font-size: 18px; }
.pclass { margin-left: auto; color: #858585; margin-right: -20px; }
.actor { font-size: 20px; border-bottom: 1px dotted #ddd; line-height: 21px; color: #e4e4e4; }

.work { display: grid; grid-template-columns: 312px 601px 397px; column-gap: 8px; padding-left: 1px; background: #212121; height: 670px; padding-top: 1px; align-items: start; }
.col { display: flex; flex-direction: column; height: 669px; }
.col.left { width: 311px; }
.col.right { width: 397px; }
.tab { display: flex; align-items: center; width: 225px; height: 33px; flex: none; border-radius: 2px 2px 0 0; margin-left: 6px; padding: 0 14px 0 9px; }
.tab .ti { width: 24px; height: 24px; margin-right: 9px; } .tab .xs { margin-left: auto; }
.up { padding-bottom: 2px; }
.active { background: #3e3e3e; } .idle { background: #2c2c2c; }
.focus { background: linear-gradient(#b99a20 0 1px, #3e3e3e 2px); }
.panel { background: #3e3e3e; }

/* components */
.comps { height: 165px; flex: none; padding: 3px; }
.addbar { height: 45px; background: #2f2f2f; border-radius: 3px; display: flex; padding: 5px 4px 0 5px; gap: 9px; }
.green-btn { font-family: inherit; border: 1px solid #418a41; border-radius: 2px; background: #52a852; color: #fff; display: flex; align-items: center; height: 36px; padding: 0 0 0 4px; font-size: 19px; width: 124px; line-height: 1; flex: none; }
.green-btn .plus { width: 16px; height: 16px; margin-right: 5px; }
.green-btn > span { margin-top: -2px; }
.green-btn.big { width: 219px; font-size: 22px; padding-left: 11px; }
.big b { text-shadow: 2px 2px 1px #000; } .big .plus { filter: drop-shadow(1px 2px 0 #000); margin-right: 4px !important; margin-top: -3px; }
.caret { width: 14px; height: 9px; color: #fff; margin-left: 6px; }
.green-btn .caret { margin-left: 5px; }
.search { background: #cbcbcb; border-radius: 2px; height: 27px; display: flex; align-items: center; color: #8a8a8a; padding: 0 0 0 7px; font-size: 19px; overflow: hidden; }
.search > span { margin-top: -2px; }
.search .mag { width: 24px; height: 24px; margin-left: auto; }
.s1 { width: 68px; margin-top: 4px; } .s1 > span { margin: 0 0 0 1px; } .s2 { width: 106px; margin-left: 3px; } .s3 { width: 548px; height: 32px; } .s4 { width: 280px; }
.s4 > span { margin-top: -3px; } .s4 .mag { margin-top: -2px; }
.crow { height: 30px; margin: 0 3px; background: #4a4a4a; display: flex; align-items: center; font-size: 18.5px; padding-bottom: 3px; }
.i24 { width: 24px; height: 24px; }
.self { margin-top: 3px; gap: 8px; padding-left: 1px; padding-bottom: 4px; }
.rule { height: 1px; background: #6a6a6a; margin: 2px 5px 8px; }
.tri { width: 12px; height: 12px; }
.root { padding-left: 16px; padding-bottom: 6px; } .root .i24 { margin: 0 2px 0 2px; }
.boxrow { background: #c8ad87; color: #0c0c0c; padding-left: 45px; padding-bottom: 5px; gap: 3px; }

/* my blueprint */
.second { margin-top: 8px; }
.blue { height: 429px; position: relative; padding: 9px 3px 3px; }
.bpbar { display: flex; align-items: center; padding-left: 6px; height: 36px; }
.bpbar .s2 { margin-top: 0; }
.eye { width: 28px; height: 18px; margin-left: 9px; } .ec { margin-left: 3px; }
.bpbody { display: flex; margin-top: 12px; height: 368px; overflow: hidden; }
.tree { width: 281px; overflow: hidden; }
.ghead { height: 36px; background: #2f2f2f; display: flex; align-items: center; font-size: 19.5px; padding: 0 4px 0 1px; }
.ghead:first-child { border-radius: 4px 4px 0 0; }
.ghead b { text-shadow: 2px 2px 1px #000; margin-left: 2px; }
.ghead .tri { margin-bottom: 3px; }
.ghead em { font-style: normal; font-size: 16.5px; color: #8b8b8b; margin-left: 7px; padding-top: 4px; }
.addp { margin: -1px 0 0 auto; width: 30px; height: 27px; background: #434343; border-radius: 3px; display: grid; place-items: center; }
.addp svg { width: 16px; height: 16px; }
.trow { height: 30px; display: flex; align-items: center; font-size: 19.5px; }
.trow > span { margin-top: 2px; }
.eg { padding: 0 0 2px 1px; height: 29px; } .gico { width: 24px; height: 20px; margin: 0 5px 0 2px; }
.ev { padding-left: 30px; gap: 5px; padding-bottom: 1px; }
.fn { margin-top: 4px; border-radius: 4px 4px 0 0; }
.cs { padding: 0 0 2px 15px; gap: 5px; } .cs .i24 { margin-top: 2px; }
.mc { margin-top: 3px; border-radius: 4px; } .vr { margin-top: 3px; border-radius: 4px 4px 0 0; }
.cp { height: 27px; font-size: 18px; padding-left: 1px; } .cp b { margin-left: 2px; } .cp .tri { margin-bottom: 4px; }
.rt { color: #a0a0a0; } .rt > span { margin-top: 0; }
.bx { padding-bottom: 2px; }
.sbar { width: 16px; margin-left: 4px; background: linear-gradient(90deg, transparent 8px, #5a5a5a 8px 9px, transparent 9px); }
.thumbbar { margin-top: 1px; height: 324px; background: #fff; border: 1px solid #1c1c1c; border-width: 0 0 1px; border-radius: 2px; }
.fade { position: absolute; left: 3px; right: 3px; bottom: 3px; height: 11px; background: radial-gradient(ellipse 60% 100% at 50% 100%, rgba(10, 10, 10, .85), rgba(10, 10, 10, .4) 70%, transparent); }

/* toolbar */
.toolbar { height: 94px; flex: none; display: flex; background: linear-gradient(135deg, #a88419 9px, transparent 10px), #3e3e3e; position: relative; }
.tool { display: flex; flex-direction: column; align-items: center; font-size: 18px; padding-top: 3px; gap: 3px; flex: none; }
.tool svg { width: 62px; height: 62px; }
.compile { width: 90px; } .tc { margin: 43px 24px 0 11px; color: #c9c9c9; }
.sep { width: 3px; height: 88px; background: #2c2c2c; margin-top: 3px; flex: none; }
.save { width: 98px; } .browse { width: 60px; } .s2nd { margin-left: 21px; }
.findt { width: 100px; } .hide { width: 122px; }
.more { width: 24px; height: 24px; margin: 34px 0 0 26px; }

.tabs { display: flex; margin-top: 8px; margin-left: 6px; flex: none; }
.tabs .tab { margin: 0; width: 195px; } .tabs .tab.ct { margin-left: 1px; padding-left: 11px; } .tabs .tab.et { margin-left: 1px; } .tabs .et .ti { margin-right: 10px; } .tabs .ct .ti { width: 22px; margin-right: 9px; } .tabs .vt .ti { width: 22px; margin-right: 11px; }
.tab .ti.g { height: 20px; }
.clipt { width: 120px; overflow: hidden; padding: 4px 0; }
.viewport { display: grid; height: 413px; flex: none; border: 3px solid #3e3e3e; }
.viewport > * { grid-area: 1 / 1; }
.scene { width: 595px; height: 407px; }
.ax { font: 19px Roboto, sans-serif; } .d2 { font: bold 12px Roboto, sans-serif; fill: #aaa; }
.vbar { z-index: 1; display: flex; align-items: flex-start; padding: 7px 0 0 7px; height: 50px; }
.vb { height: 37px; background: #8a8a8a; border-radius: 9px; display: flex; align-items: center; justify-content: center; color: #242424; font-size: 18.5px; gap: 6px; box-shadow: 0 0 0 1px #111; flex: none; }
.vb b { margin-top: 1px; }
.v1 { width: 31px; } .v2 { width: 139px; margin-left: 8px; } .v3 { width: 69px; margin-left: 8px; }
.group { width: 148px; margin-left: 9px; overflow: hidden; gap: 0; justify-content: flex-start; height: 38px; }
.group > span { width: 38px; display: grid; place-items: center; }
.group > .orange { width: 35px; height: 38px; background: #9c6010; }
.group > .g2 { width: 42px; padding-left: 1px; }
.group > span:last-child { width: 33px; }
.v5 { width: 34px; margin-left: 7px; height: 38px; } .v6 { width: 35px; margin-left: 7px; border-radius: 9px 0 0 9px; } .v7 { width: 22px; margin-left: 63px; height: 38px; }

.ft { margin-top: 9px; }
.findp { height: 78px; padding: 3px; }
.findrow { display: flex; gap: 7px; align-items: center; }
.sq { width: 36px; height: 31px; border: 1px solid #ddd; border-radius: 2px; background: linear-gradient(#dcdcdc, #a2a2a2); display: grid; place-items: center; box-shadow: 0 0 0 1px #222; }
.results { margin-top: 6px; height: 34px; border: 1px solid #000; background: linear-gradient(#292929, #191919 60%, #1e1e1e); }

/* details */
.det { height: 635px; padding: 0 3px; }
.dbar { height: 39px; display: flex; align-items: center; padding: 4px 0 0 3px; }
.list { width: 40px; height: 34px; margin: -1px 0 0 13px; } .dbar .eye { margin-left: 5px; } .dbar .ec { margin-left: 3px; color: #b8b8b8; }
.s4 { margin-top: 1px; }
.props { display: grid; height: 593px; overflow: hidden; }
.props > * { grid-area: 1 / 1; }
.rows { width: 391px; background: linear-gradient(90deg, transparent 127px, #262626 127px 129px, transparent 129px); }
.phead { height: 44px; display: flex; align-items: center; font-size: 20px; padding: 0 0 2px 4px; border-radius: 4px 4px 0 0; background: linear-gradient(90deg, transparent 127px, #212121 127px 129px, transparent 129px), #2f2f2f; }
.phead b { margin-left: 5px; text-shadow: 2px 2px 1px #000; } .phead .tri { margin-top: 4px; }
.prow { display: flex; align-items: center; font-size: 16.5px; height: 25px; padding-left: 24px; }
.prow label { width: 101px; margin-right: 8px; overflow: hidden; display: flex; align-items: center; height: 25px; flex: none; }
.vn label, .tt label, .cg label, .ew label, .mb label, .be label { padding-top: 1px; }
.inp, .num { background: #d8d8d8; border-radius: 4px; color: #0e0e0e; height: 25px; display: flex; align-items: center; }
.inp { width: 188px; padding-left: 8px; padding-top: 1px; }
.vn { margin-top: 4px; } .tt { margin-top: 8px; } .cg { margin-top: 9px; height: 29px; }
.combo { width: 186px; height: 29px; margin-left: 1px; border: 1px solid #ddd; box-shadow: 0 0 0 1px #262626; border-radius: 2px; background: linear-gradient(90deg, #f2f2f2 151px, transparent 151px), linear-gradient(#cfcfcf, #8d8d8d); display: flex; align-items: center; color: #0c0c0c; padding-left: 9px; }
.combo span { margin-top: 1px; }
.combo i { margin-left: auto; margin-right: 12px; }
.ew { margin-top: 11px; height: 23px; } .chk { width: 22px; height: 22px; margin-left: 1px; border-radius: 2px; background: #cdcdcd; display: grid; place-items: center; }
.tr { margin-top: 26px; height: 43px; }
.r-loc { margin-top: 6px; } .r-rot { margin-top: 10px; } .r-scl { margin-top: 11px; }
.lc { width: 13px; height: 8px; margin-left: 6px; }
.vec { display: flex; gap: 3px; align-items: center; }
.num { width: 57px; border-left: 5px solid #cf2a05; padding-left: 4px; }
.num.y { border-left-color: #5f9e04; border-left-width: 4px; padding-left: 5px; } .num.z { border-left-color: #2d7af0; border-left-width: 4px; width: 56px; padding-left: 5px; }
.num.plain { border-left: 0; }
.nv { width: 26px; overflow: hidden; display: flex; padding-top: 1px; }
.spin { width: 13px; height: 13px; margin-left: 4px; }
.r-rot .nv { width: 20px; } .r-rot .num { padding-left: 9px; } .r-rot .spin { margin-left: 2px; }
.lock { width: 20px; height: 24px; margin-left: 3px; } .undo { width: 12px; height: 12px; margin-left: 6px; margin-top: -1px; }
.mb { margin-top: 9px; height: 30px; }
.mob { display: flex; width: 206px; height: 30px; border-radius: 9px; overflow: hidden; background: #565656; color: #c4c4c4; }
.mob > span { display: flex; align-items: center; }
.m1 { width: 69px; padding-left: 12px; gap: 19px; border-right: 2px solid #3a3a3a; } .m2 { width: 70px; padding-left: 10px; gap: 17px; border-right: 1px solid #3a3a3a; }
.m3 { flex: 1 !important; background: #bb8a0c; color: #0c0c0c; padding-left: 6px; gap: 16px; }
.sk { margin-top: 23px; height: 43px; border-radius: 4px; } .phead .cl { width: 10px; height: 14px; margin: 4px 1px 0; } .shp { border-radius: 0; }
.be { margin-top: 7px; padding-left: 5px; } .be .cl { width: 10px; height: 14px; margin: 0 8px 3px 1px; }
.ext { gap: 4px; } .ext .num { width: 66px; padding-left: 5px; } .axl { width: 20px; } .ext .spin { margin-left: 2px; }
.ext span { margin-top: 1px; }
.lt { margin-top: 12px; } .lt label { width: 104px; margin-right: 5px; } .wide { width: 158px; padding-left: 6px; } .wide .spin { margin-left: auto; margin-right: 9px; }
.endshade { margin-top: 9px; height: 9px; width: 367px; background: radial-gradient(ellipse at 50% 0, #1c1c1c, #3e3e3e 72%); border-top: 1px solid #2b2b2b; }
.tailrow { height: 3px; background: #3e3e3e; }
.dsb { margin-left: 371px; margin-bottom: 0; z-index: 1; }
.dsb .thumbbar { margin-top: 3px; height: 172px; }
</style>
